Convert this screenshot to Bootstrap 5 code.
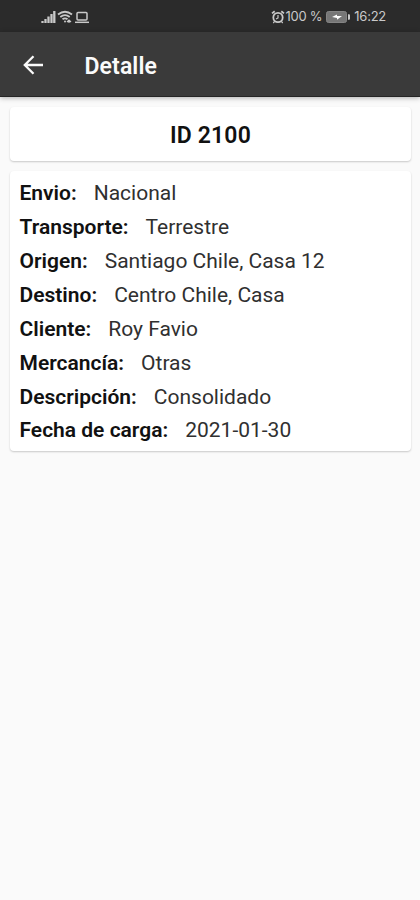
<!DOCTYPE html>
<html lang="es">
<head>
<meta charset="utf-8">
<meta name="viewport" content="width=device-width, initial-scale=1">
<title>Detalle</title>
<link href="https://cdn.jsdelivr.net/npm/bootstrap@5.3.0/dist/css/bootstrap.min.css" rel="stylesheet">
<style>
body{font-family:Roboto,sans-serif;background:#fafafa;color:#111;min-height:900px}
.status-bar{height:32px;background:#2b2b2b;color:#c9c9c9;font-family:Inter,Roboto,sans-serif;font-size:13px;padding:1px 34px 0 41px}
.status-bar svg{display:block}
.status-right{letter-spacing:-.25px}
.app-bar{height:65px;background:#3a3a3a;border-bottom:1px solid #252525;box-shadow:0 1px 5px rgba(0,0,0,.3);padding:2px 21px 0}
.app-title{font-size:23px;font-weight:600;color:#fafafa;margin-left:39.5px;line-height:1;padding-top:2px;letter-spacing:.1px}
.panel{border:0;border-radius:4px;background:#fff;box-shadow:0 1px 2px rgba(0,0,0,.2)}
.content{padding:10px 9px 0 10px;gap:10px}
.id-panel{height:54px;font-size:23px;font-weight:600;padding-top:5px;letter-spacing:.15px}
.details{padding:6px 9px 3px 9.5px}
.detail-row{height:33.87px;font-size:21px;line-height:1}
.detail-row dt{font-weight:600;margin-right:17px}
.detail-row dd{font-weight:400;color:#303030;margin:0}
</style>
</head>
<body>
<header>
<div class="status-bar d-flex align-items-center justify-content-between">
<div class="d-flex align-items-center">
<svg width="49" height="14" viewBox="0 0 49 14" fill="none" stroke="#c9c9c9" stroke-width="1.5">
<path d="M1.5 13v-2M4.5 13V9M7.5 13V6.5M10.5 13V4M13.3 13V1" stroke-width="2.3"/>
<path d="M17 4.5Q24 -1 31 4.5M19.3 7Q24 3.2 28.7 7M21.5 9.3Q24 7.5 26.5 9.3" stroke-width="1.8"/><circle cx="24" cy="11.4" r="1" fill="#c9c9c9" stroke="none"/><path d="M26 12l2-2 2 2M28 10v3" stroke-width="1.2"/>
<rect x="36" y="2.5" width="10" height="7.5" rx="1"/><path d="M34 12.3H48"/>
</svg>
</div>
<div class="d-flex align-items-center status-right">
<svg width="14" height="14" viewBox="0 0 14 14" fill="none" stroke="#c9c9c9" stroke-width="1.8"><circle cx="7" cy="7.5" r="4.7"/><path d="M1 3.4L3.7 1.2M13 3.4L10.3 1.2"/><path d="M7 5v3l-2 1M3.6 11.4L2.3 13M10.4 11.4L11.7 13" stroke-width="1.2"/></svg>
<span class="battery-text">100 %</span>
<svg class="ms-1 me-1" width="24" height="12" viewBox="0 0 24 12"><rect x=".5" y=".5" width="20" height="11" rx="2" fill="#777" stroke="#858585"/><path d="M22 3.2h1q1 0 1 1v3.6q0 1-1 1h-1z" fill="#c9c9c9"/><path d="M6 6l5-2.5v1.6h5L11 8.7V7z" fill="#fff"/></svg>
<span class="clock-text">16:22</span>
</div>
</div>
<nav class="app-bar d-flex align-items-center">
<svg width="24" height="24" viewBox="0 0 24 24" fill="none" stroke="#fafafa" stroke-width="2.3"><path d="M22 12H4M12.5 3.3L3.8 12l8.7 8.7"/></svg>
<h1 class="app-title mb-0">Detalle</h1>
</nav>
</header>
<main class="content d-flex flex-column">
<div class="card panel id-panel align-items-center justify-content-center"><span>ID 2100</span></div>
<dl class="card panel details mb-0">
<div class="detail-row d-flex align-items-center"><dt>Envio:</dt><dd>Nacional</dd></div>
<div class="detail-row d-flex align-items-center"><dt>Transporte:</dt><dd>Terrestre</dd></div>
<div class="detail-row d-flex align-items-center"><dt>Origen:</dt><dd>Santiago Chile, Casa 12</dd></div>
<div class="detail-row d-flex align-items-center"><dt>Destino:</dt><dd>Centro Chile, Casa</dd></div>
<div class="detail-row d-flex align-items-center"><dt>Cliente:</dt><dd>Roy Favio</dd></div>
<div class="detail-row d-flex align-items-center"><dt>Mercancía:</dt><dd>Otras</dd></div>
<div class="detail-row d-flex align-items-center"><dt>Descripción:</dt><dd>Consolidado</dd></div>
<div class="detail-row d-flex align-items-center"><dt>Fecha de carga:</dt><dd>2021-01-30</dd></div>
</dl>
</main>
<script src="https://cdn.jsdelivr.net/npm/bootstrap@5.3.0/dist/js/bootstrap.bundle.min.js"></script>
</body>
</html>
